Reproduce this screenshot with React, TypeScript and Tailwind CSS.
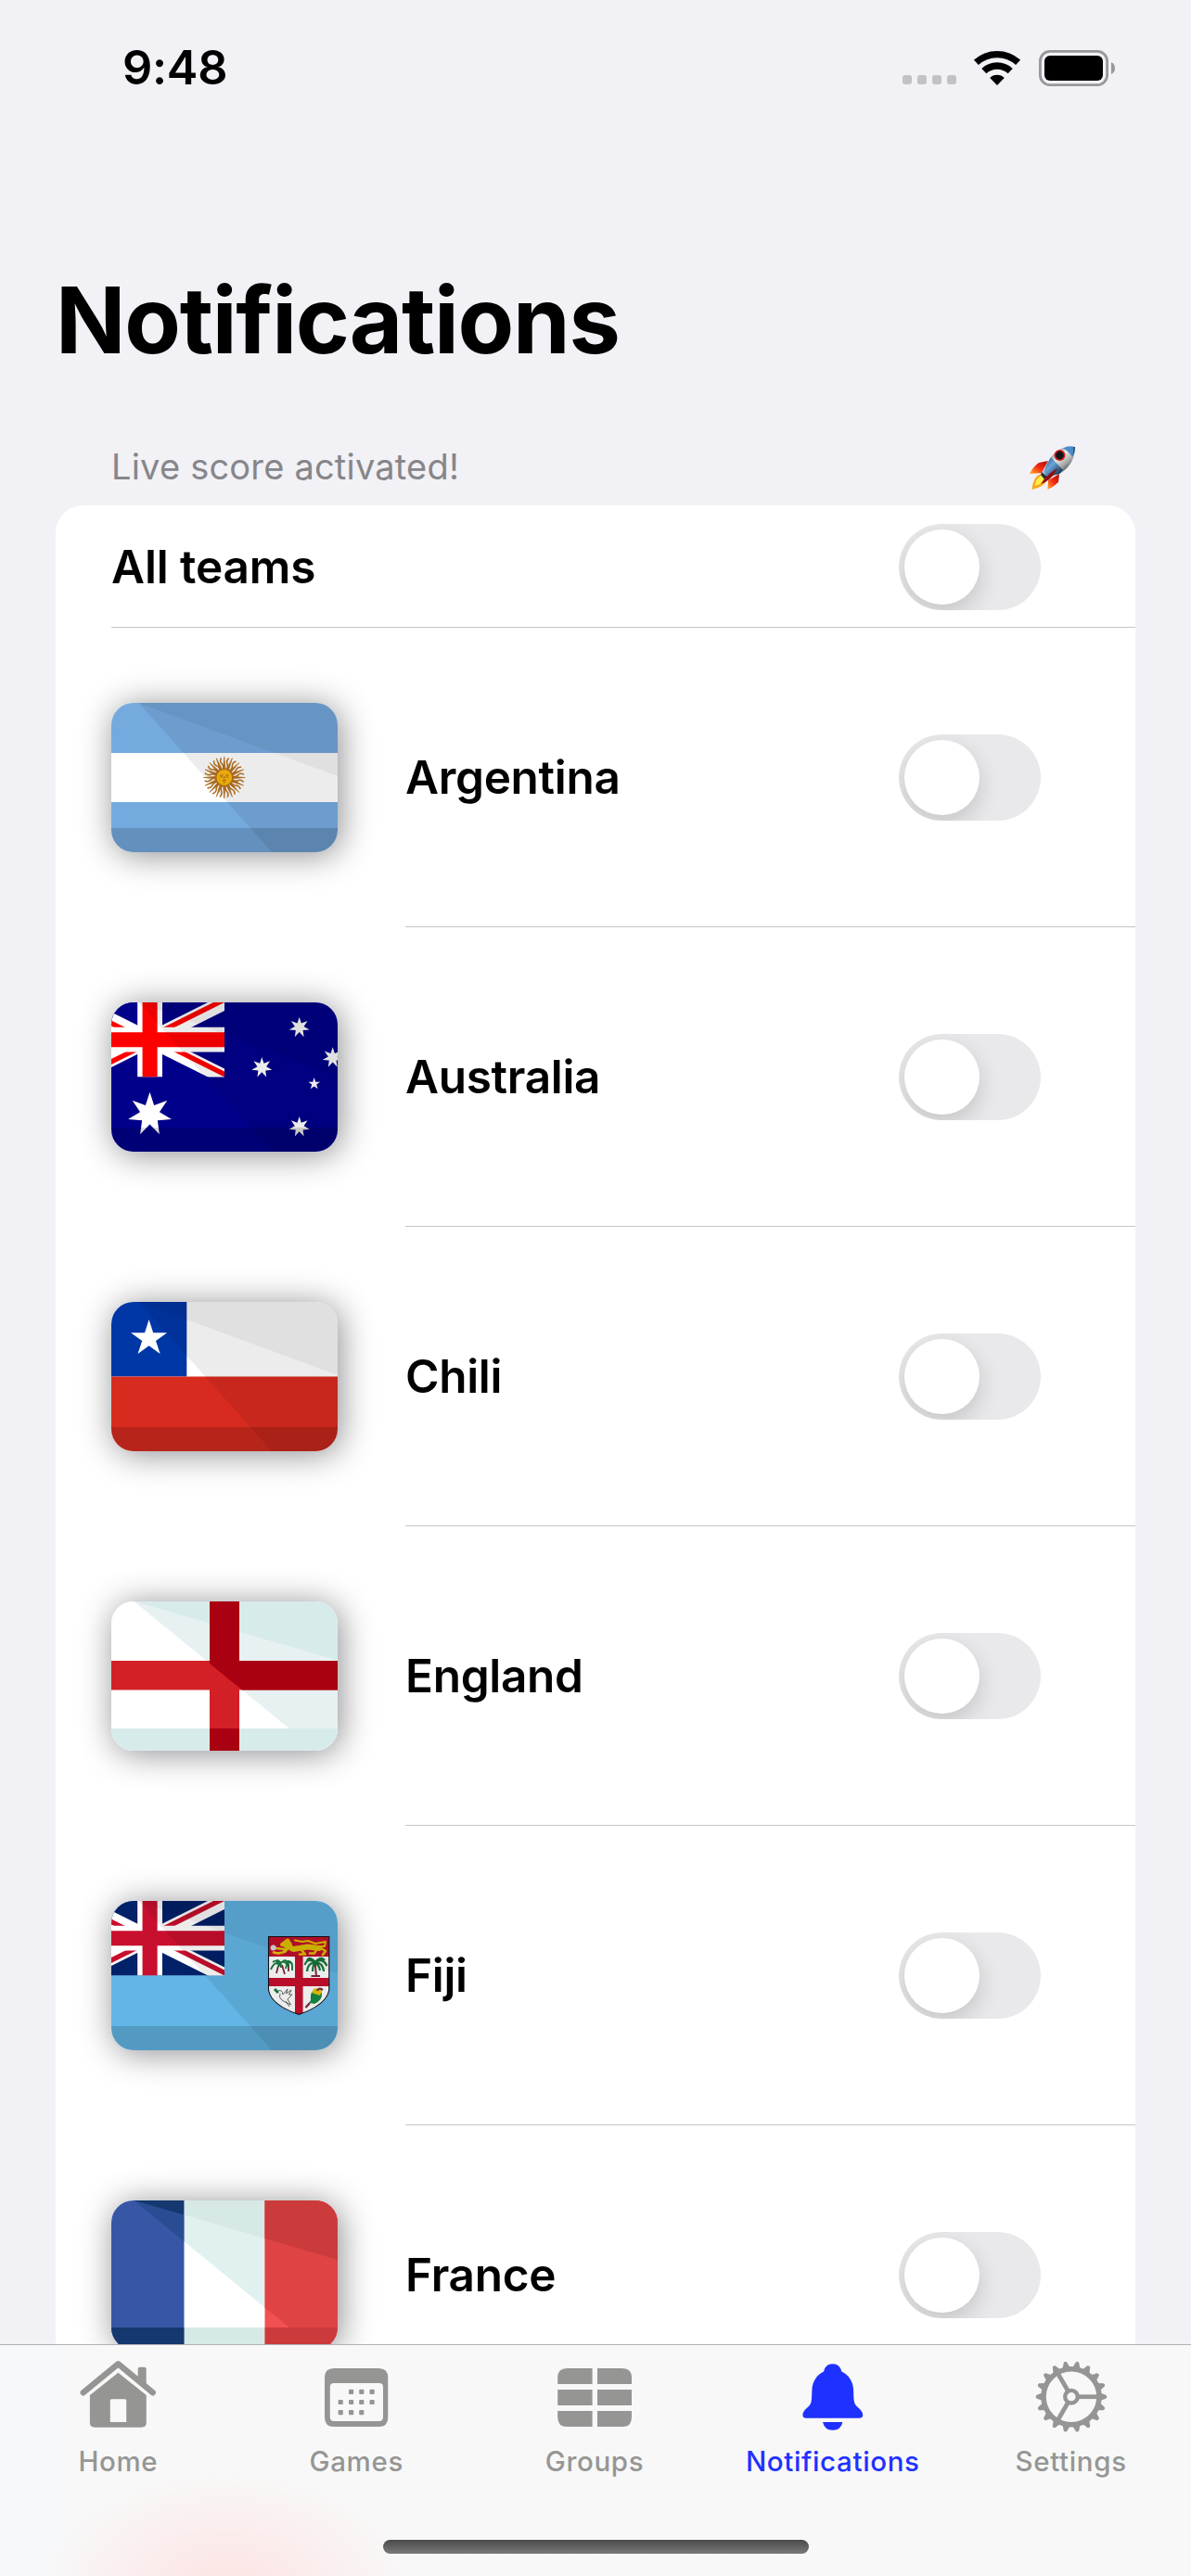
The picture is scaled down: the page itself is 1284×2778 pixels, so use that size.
import { useState, type ReactNode } from "react";
import clsx from "clsx";

type FlagCode = "ar" | "au" | "cl" | "en" | "fj" | "fr";

type Team = {
  code: FlagCode;
  name: string;
};

const TEAMS: Team[] = [
  { code: "ar", name: "Argentina" },
  { code: "au", name: "Australia" },
  { code: "cl", name: "Chili" },
  { code: "en", name: "England" },
  { code: "fj", name: "Fiji" },
  { code: "fr", name: "France" },
];

function starPoints(cx: number, cy: number, outer: number, inner: number, tips: number) {
  return Array.from({ length: tips * 2 }, (_, i) => {
    const r = i % 2 === 0 ? outer : inner;
    const a = (Math.PI * i) / tips - Math.PI / 2;
    return `${(cx + r * Math.cos(a)).toFixed(2)},${(cy + r * Math.sin(a)).toFixed(2)}`;
  }).join(" ");
}

// Folded-paper shading shared by most flags
function Shade({ edge = 79 }: { edge?: number }) {
  return (
    <>
      <path d="M29.5 0H244V161H173Z" fill="#000" fillOpacity=".075" />
      <path d={`M29.5 0H244V${edge}Z`} fill="#000" fillOpacity=".05" />
      <path d="M0 135H244V161H0Z" fill="#000" fillOpacity=".15" />
    </>
  );
}

function UnionJack({ id, blue, red }: { id: string; blue: string; red: string }) {
  return (
    <g clipPath={`url(#${id}-canton)`}>
      <clipPath id={`${id}-canton`}>
        <path d="M0 0H122V80.5H0Z" />
      </clipPath>
      <clipPath id={`${id}-saltire`}>
        <path d="M30 15h30v15zv15h-30zh-30v-15zv-15h30z" />
      </clipPath>
      <g transform="translate(-38.8 0) scale(2.68)">
        <path d="M0 0H60V30H0Z" fill={blue} />
        <path d="M0 0L60 30M60 0L0 30" stroke="#fff" strokeWidth="6" />
        <path d="M0 0L60 30M60 0L0 30" stroke={red} strokeWidth="4" clipPath={`url(#${id}-saltire)`} />
        <path d="M30 0V30M0 15H60" stroke="#fff" strokeWidth="10" />
        <path d="M30 0V30M0 15H60" stroke={red} strokeWidth="6" />
      </g>
    </g>
  );
}

function Argentina() {
  return (
    <>
      <path d="M0 0H244V161H0Z" fill="#75aadf" />
      <path d="M0 54H244V107H0Z" fill="#fff" />
      <Shade />
      {Array.from({ length: 32 }, (_, i) => (
        <path
          key={i}
          d={i % 2 === 0 ? "M0 -8L-1.3 -9L0 -22.5L1.3 -9Z" : "M0 -8Q2.4 -12 .3 -15T.8 -21.5"}
          transform={`translate(121.8 80.5) rotate(${i * 11.25})`}
          fill={i % 2 === 0 ? "#a8691f" : "none"}
          stroke="#a8681a"
          strokeWidth={i % 2 === 0 ? 0.6 : 1.5}
        />
      ))}
      <circle cx="121.8" cy="80.5" r="9" fill="#e8a90f" stroke="#a8640f" strokeWidth="1.2" />
      <path
        d="M117 78h3.6M123 78h3.6M117.4 80h2.6M123.6 80h2.6M121.8 79v3.5M119.8 83.6h4M120.6 85.6h2.4"
        stroke="#8c5410"
        strokeWidth=".8"
        fill="none"
      />
    </>
  );
}

function Australia() {
  return (
    <>
      <path d="M0 0H244V161H0Z" fill="#00008b" />
      <UnionJack id="au" blue="#00008b" red="#ff0000" />
      <g fill="#fff">
        <polygon points={starPoints(41.5, 120.7, 24, 10.7, 7)} />
        <polygon points={starPoints(202.7, 27, 11.3, 5, 7)} />
        <polygon points={starPoints(162.3, 70.3, 11.3, 5, 7)} />
        <polygon points={starPoints(238.7, 59.5, 11.3, 5, 7)} />
        <polygon points={starPoints(202.7, 134.3, 11.3, 5, 7)} />
        <polygon points={starPoints(218.7, 87.8, 6.7, 2.6, 5)} />
      </g>
      <Shade />
    </>
  );
}

function Chile() {
  return (
    <>
      <path d="M0 0H244V81H0Z" fill="#fff" />
      <path d="M0 0H81.3V80.5H0Z" fill="#0037a6" />
      <path d="M0 80.5H244V161H0Z" fill="#d82b1f" />
      <Shade />
      <polygon points={starPoints(40.6, 39.5, 20.5, 7.8, 5)} fill="#fff" />
    </>
  );
}

function England() {
  return (
    <>
      <path d="M0 0H244V161H0Z" fill="#fff" />
      <path d="M24.5 0H244V161H221Z" fill="#e8f1f2" />
      <path d="M24.5 0H244V63.5ZM0 137H244V161H0Z" fill="#d8ebeb" />
      <path d="M106 0H138V64H244V95.5H138V161H106V95.5H0V64H106Z" fill="#d32027" />
      <path d="M106 0H138V64H244V95.5H141L106 67ZM106 137H138V161H106Z" fill="#a90012" />
    </>
  );
}

function Fiji() {
  return (
    <>
      <path d="M0 0H244V161H0Z" fill="#62b5e5" />
      <UnionJack id="fj" blue="#012169" red="#c8102e" />
      <clipPath id="fj-shield">
        <path d="M169.5 38.5H234.8V96Q232 112 202.2 122.6Q172 112 169.5 96Z" />
      </clipPath>
      <g clipPath="url(#fj-shield)">
        <path d="M169 38H236V124H169Z" fill="#fff" />
        <path d="M169 38H236V60H169Z" fill="#c8102e" />
        <path d="M198 60H206.6V124H198ZM169 83H236V92H169Z" fill="#c8102e" />
        {/* lion */}
        <g fill="none" stroke="#e8c800" strokeLinecap="round" strokeLinejoin="round">
          <path d="M187 47L196 52L212 49.5L224 51" strokeWidth="6" />
          <path d="M184 47L190 42.5L193 47L187 54" strokeWidth="4" />
          <path d="M187 52L177 51M187 55L180 56.5L175 55.5M205 53L209 57.5H203M222 51L219 56.5H214M226 51L231 54L228 58" strokeWidth="2.6" />
          <path d="M224 49L230 49L231 44L220 46L212 43L206 44L198 42.5" strokeWidth="2" />
        </g>
        <circle cx="174.6" cy="50.5" r="3" fill="#e6e2e8" />
        {/* sugar cane */}
        <path d="M178 78L180 70M187 79L184 69M191 76L191 68" stroke="#7d2b3c" strokeWidth="1.8" />
        <path
          d="M172 74Q176 64 181 69M174 66Q179 62 181 70M178 64Q183 64 183 72M180 71Q184 62 189 68M185 65Q190 62 191 71M188 73Q190 63 195 68M190 65Q196 64 195 75"
          stroke="#147a3c"
          strokeWidth="1.9"
          fill="none"
        />
        {/* coconut palm */}
        <path d="M219.6 66L221 81M215.5 81H225" stroke="#7d2b3c" strokeWidth="2" />
        <path
          d="M220 67Q212 60 208.5 69M220 67Q212 66 211 76M220 67Q217 69 217 76M220 66Q214 59 211 64M220 66Q225 59 230 64M220 66Q228 61 232.5 70M220 67Q228 66 229 76M220 67Q224 69 225 75"
          stroke="#147a3c"
          strokeWidth="2.2"
          fill="none"
        />
        {/* dove */}
        <path d="M176 95L180 99" stroke="#147a3c" strokeWidth="3" />
        <path
          d="M180 97Q184 95 185 101L190 95L188.5 100L194 96L191.5 101L195 101L190 106L193.5 112L187.5 109L184 107Q180 104 182 100M188 108L192 114"
          fill="#fff"
          stroke="#444"
          strokeWidth=".8"
        />
        {/* cocoa pod */}
        <path d="M215 107Q214 98 219 96L227 99Q228 107 219 111L214 110L210 115" fill="#178a45" />
        <path d="M218 95L221 94L227 97L225 102L216 99Z" fill="#e8c400" />
        <path d="M222 97Q223 93 228 96M214 110L209.5 115" stroke="#7d2b3c" strokeWidth="2.2" fill="none" />
      </g>
      <path
        d="M169.5 38.5H234.8V96Q232 112 202.2 122.6Q172 112 169.5 96Z"
        fill="none"
        stroke="#101018"
        strokeWidth="1.1"
      />
      <Shade />
    </>
  );
}

function France() {
  return (
    <>
      <path d="M0 0H78.7V161H0Z" fill="#3757a6" />
      <path d="M78.7 0H165.5V161H78.7Z" fill="#fff" />
      <path d="M165.5 0H244V161H165.5Z" fill="#f25051" />
      <path d="M24.5 0H78.7V44.5Z" fill="#2a4c93" />
      <path d="M24.5 0H78.7V15.6ZM0 137H78.7V161H0Z" fill="#14386f" />
      <path d="M78.7 0H165.5V115.5L78.7 44.5Z" fill="#e1f1ef" />
      <path d="M78.7 0H165.5V41L78.7 15.6ZM78.7 137H165.5V161H78.7Z" fill="#d6e9e6" />
      <path d="M165.5 0H244V137H192L165.5 115.5Z" fill="#df4344" />
      <path d="M165.5 0H244V64L165.5 41ZM165.5 137H244V161H165.5Z" fill="#cb3b3c" />
    </>
  );
}

const FLAGS: Record<FlagCode, () => ReactNode> = {
  ar: Argentina,
  au: Australia,
  cl: Chile,
  en: England,
  fj: Fiji,
  fr: France,
};

function Flag({ code }: { code: FlagCode }) {
  const Art = FLAGS[code];
  return (
    <div className="h-[161px] w-[244px] shrink-0 rounded-3xl shadow-[3px_3px_36px_rgba(0,0,10,0.45)]">
      <svg viewBox="0 0 244 161" className="size-full rounded-3xl">
        <Art />
      </svg>
    </div>
  );
}

function Toggle({ label, checked, onChange }: { label: string; checked: boolean; onChange: () => void }) {
  return (
    <button
      type="button"
      role="switch"
      aria-label={label}
      aria-checked={checked}
      onClick={onChange}
      className={clsx(
        "flex h-[93px] w-[153px] shrink-0 items-center overflow-hidden rounded-full p-1.5",
        checked ? "justify-end bg-[#34c759]" : "bg-[#e9e9eb]",
      )}
    >
      <span className="size-[81px] rounded-full bg-white shadow-[0_9px_24px_rgba(0,0,0,0.16)]" />
    </button>
  );
}

function StatusBar() {
  return (
    <header className="flex h-[146px] shrink-0 items-center justify-between pr-[82px] pl-[132px]">
      <span className="text-[50.5px] font-semibold tracking-[-0.3px]">9:48</span>
      <div className="flex items-center">
        <div className="mt-[26px] flex gap-1.5">
          {[0, 1, 2, 3].map((i) => (
            <span key={i} className="size-2.5 rounded-[3px] bg-[#c2c1c6]" />
          ))}
        </div>
        <svg viewBox="0 0 50 38" className="ml-[19px] h-[38px] w-[50px]">
          <path d="M2.4 13.4A33.4 33.4 0 0 1 47.6 13.4" fill="none" stroke="#000" strokeWidth="7.4" />
          <path d="M10.8 22.6A20.8 20.8 0 0 1 39.2 22.6" fill="none" stroke="#000" strokeWidth="7.4" />
          <path d="M25 38L17.2 30A11.2 11.2 0 0 1 32.8 30Z" />
        </svg>
        <svg viewBox="0 0 82 39" className="ml-5 h-[39px] w-[82px]">
          <rect x="1.4" y="1.4" width="72.2" height="36.2" rx="10.5" fill="none" stroke="#98979b" strokeWidth="2.8" />
          <rect x="6" y="6" width="63" height="27" rx="6" />
          <path d="M78 13Q82 15 82 19.5T78 26Z" fill="#98979b" />
        </svg>
      </div>
    </header>
  );
}

function Rocket() {
  return (
    <svg viewBox="0 0 50 48" className="mt-[3px] h-12 w-[50px]" role="img" aria-label="rocket">
      <defs>
        <linearGradient id="hull" x1=".2" y1=".2" x2=".7" y2=".8">
          <stop offset="0" stopColor="#6e7880" />
          <stop offset=".4" stopColor="#e9ebe8" />
          <stop offset=".75" stopColor="#a5a9a6" />
          <stop offset="1" stopColor="#555c60" />
        </linearGradient>
        <linearGradient id="fin" x1="1" y1="0" x2="0" y2="1">
          <stop offset="0" stopColor="#a80a08" />
          <stop offset=".5" stopColor="#f42a12" />
          <stop offset="1" stopColor="#ffb12a" />
        </linearGradient>
        <linearGradient id="tail" x1=".1" y1=".1" x2=".8" y2=".8">
          <stop offset="0" stopColor="#35658f" />
          <stop offset=".45" stopColor="#6ba4d8" />
          <stop offset="1" stopColor="#1d4468" />
        </linearGradient>
      </defs>
      <path d="M20 16L10 18Q4 22 0 30L13 29Z" fill="url(#fin)" />
      <path d="M32 30L31 39Q26 44 19.5 47L20 37Z" fill="url(#fin)" />
      <path d="M13 30Q4 32 2.5 47Q16 44 19 36Z" fill="#f8a51c" />
      <path d="M14 31Q7 34 5.5 43Q14 41 18 35Z" fill="#ffee4a" />
      <path d="M49 1Q34 -2 23 12L14 29L19 34L32 30Q49 20 49 1Z" fill="url(#hull)" />
      <path d="M23 12Q18 19 15 28L19 33L32 30L36 26Z" fill="url(#tail)" />
      <path d="M49 1Q42 -1 36 2.5Q42 5 46 12Q49 7 49 1Z" fill="#4a8cc8" />
      <path d="M47 1Q48 5 46 12Q49 7 49 1Z" fill="#1c456d" />
      <path d="M13 28L19 33L16 36L12 31Z" fill="#28303a" />
      <path d="M30 24Q19 30 12 41Q24 37 30 24Z" fill="#8f0d0c" />
      <circle cx="32.5" cy="10" r="6" fill="#d41c1c" />
      <circle cx="32.5" cy="10" r="4.4" fill="#12161a" />
    </svg>
  );
}

function HomeIcon() {
  return (
    <>
      <path d="M11.7 44.3L49.4 13.2L86.8 44.3" fill="none" stroke="currentColor" strokeWidth="6.4" strokeLinecap="round" strokeLinejoin="round" />
      <path d="M70.7 30V18.7Q70.7 16.7 72.7 16.7H77.7Q79.7 16.7 79.7 18.7V38Z" />
      <path
        fillRule="evenodd"
        d="M49.4 22.8L79.8 47V76.5Q79.8 81.7 74.5 81.7H24.2Q18.9 81.7 18.9 76.5V47ZM42.3 51.2Q40.8 51.2 40.8 52.8V76H58.2V52.8Q58.2 51.2 56.7 51.2Z"
      />
    </>
  );
}

function CalendarIcon() {
  const dots = [
    [43.6, 43.3], [54.8, 43.3], [66.1, 43.3],
    [32.2, 54.5], [43.6, 54.5], [54.8, 54.5], [66.1, 54.5],
    [32.2, 65.7], [43.6, 65.7], [54.8, 65.7],
  ];
  return (
    <>
      <path
        fillRule="evenodd"
        d="M25 18H73.3Q83.3 18 83.3 28V71Q83.3 81 73.3 81H25Q15 81 15 71V28Q15 18 25 18ZM25 34Q20.8 34 20.8 38.2V70.8Q20.8 75 25 75H73.8Q78 75 78 70.8V38.2Q78 34 73.8 34Z"
      />
      {dots.map(([x, y]) => (
        <rect key={`${x}-${y}`} x={x - 2.6} y={y - 2.6} width="5.2" height="5.2" rx="1" />
      ))}
    </>
  );
}

function GridIcon() {
  return (
    <>
      <path d="M46.6 18V35H9.2V28Q9.2 18 19.2 18ZM52 18H79Q89 18 89 28V35H52Z" />
      <path d="M9.2 41H46.6V58H9.2ZM52 41H89V58H52Z" />
      <path d="M46.6 64V81H19.2Q9.2 81 9.2 71V64ZM52 64H89V71Q89 81 79 81H52Z" />
    </>
  );
}

function BellIcon() {
  return (
    <>
      <path d="M48.7 13.3C54 13.3 57.3 16.6 58.3 21.4C66 25 70.4 32 71 40C71.4 46 71 50 72 54.5C73.2 60 81.2 62.5 81.2 68.2Q81.2 71.8 77.2 71.8H20.4Q16.4 71.8 16.4 68.2C16.4 62.5 24.3 60 25.5 54.5C26.5 50 26 46 26.5 40C27.1 32 31.5 25 39.1 21.4C40.1 16.6 43.4 13.3 48.7 13.3Z" />
      <path d="M38 76H59.4Q57.4 84.8 48.7 84.8T38 76Z" />
    </>
  );
}

function GearIcon() {
  return (
    <g fill="none" stroke="currentColor">
      <circle cx="49" cy="48.7" r="30" strokeWidth="5.6" />
      <circle cx="49" cy="48.7" r="6.8" strokeWidth="4.4" />
      {[0, 120, 240].map((a) => (
        <path key={a} d="M57 48.7H78" strokeWidth="4.8" transform={`rotate(${a} 49 48.7)`} />
      ))}
      {Array.from({ length: 18 }, (_, i) => (
        <path
          key={i}
          d="M80.5 44.6L86.6 47Q88.2 48.7 86.6 50.4L80.5 52.8Z"
          fill="currentColor"
          stroke="none"
          transform={`rotate(${i * 20} 49 48.7)`}
        />
      ))}
    </g>
  );
}

const TABS = [
  { key: "home", label: "Home", Icon: HomeIcon },
  { key: "games", label: "Games", Icon: CalendarIcon },
  { key: "groups", label: "Groups", Icon: GridIcon },
  { key: "notifications", label: "Notifications", Icon: BellIcon },
  { key: "settings", label: "Settings", Icon: GearIcon },
];

function TabBar({ active }: { active: string }) {
  return (
    <nav className="flex h-[250px] shrink-0 flex-col items-center border-t border-[#b2b2b4] bg-[#f8f8f8] bg-[radial-gradient(ellipse_200px_130px_at_245px_106%,#fde3e3,#fbecec_45%,#f8f8f800),linear-gradient(to_right,#f6f8fc,#f8f8f800_100px)]">
      <div className="grid w-full grid-cols-5 pt-[7px]">
        {TABS.map(({ key, label, Icon }) => (
          <a
            key={key}
            href={`#${key}`}
            className={clsx("flex flex-col items-center", key === active ? "text-[#1f31ff]" : "text-[#959694]")}
          >
            <svg viewBox="0 0 100 100" className="size-[100px]" fill="currentColor">
              <Icon />
            </svg>
            <span className="-ml-0.5 text-[29.5px] leading-9 font-medium tracking-[0.65px]">{label}</span>
          </a>
        ))}
      </div>
      <div className="mt-[67px] h-[15px] w-[459px] rounded-full bg-linear-to-b from-[#4a4a4a] to-[#7a7a7a]" />
    </nav>
  );
}

export default function App() {
  const [enabled, setEnabled] = useState<string[]>([]);
  const allOn = enabled.length === TEAMS.length;

  const toggleTeam = (code: string) => {
    setEnabled((prev) => (prev.includes(code) ? prev.filter((c) => c !== code) : [...prev, code]));
  };

  return (
    <div className="flex h-[2778px] w-[1284px] flex-col overflow-hidden bg-[#f2f1f6] font-['Inter',sans-serif] text-black">
      <StatusBar />

      <main className="min-h-0 flex-1 overflow-hidden px-[60px] pt-[139px]">
        <h1 className="text-[99px] leading-[120px] font-bold tracking-[-1.25px]">Notifications</h1>

        <div className="mt-[68px] mb-3 flex h-[60px] items-center justify-between pr-16 pl-[60px]">
          <p className="text-[38px] tracking-[0.2px] text-[#86868a]">Live score activated!</p>
          <Rocket />
        </div>

        <section className="rounded-t-[30px] bg-white text-[49.5px] font-semibold">
          <div className="h-[132px] pl-[60px]">
            <div className="flex h-full items-center justify-between border-b border-[#c6c6c8] pt-0.5 pr-[102px]">
              <span className="tracking-[-0.1px]">All teams</span>
              <Toggle
                label="All teams"
                checked={allOn}
                onChange={() => setEnabled(allOn ? [] : TEAMS.map((team) => team.code))}
              />
            </div>
          </div>

          {TEAMS.map((team) => (
            <div key={team.code} className="flex h-[323px] items-center pl-[60px]">
              <Flag code={team.code} />
              <div className="ml-[73px] flex h-full flex-1 items-center justify-between border-b border-[#c6c6c8] pt-px pr-[102px]">
                <span className="tracking-[-0.3px]">{team.name}</span>
                <Toggle label={team.name} checked={enabled.includes(team.code)} onChange={() => toggleTeam(team.code)} />
              </div>
            </div>
          ))}
        </section>
      </main>

      <TabBar active="notifications" />
    </div>
  );
}
